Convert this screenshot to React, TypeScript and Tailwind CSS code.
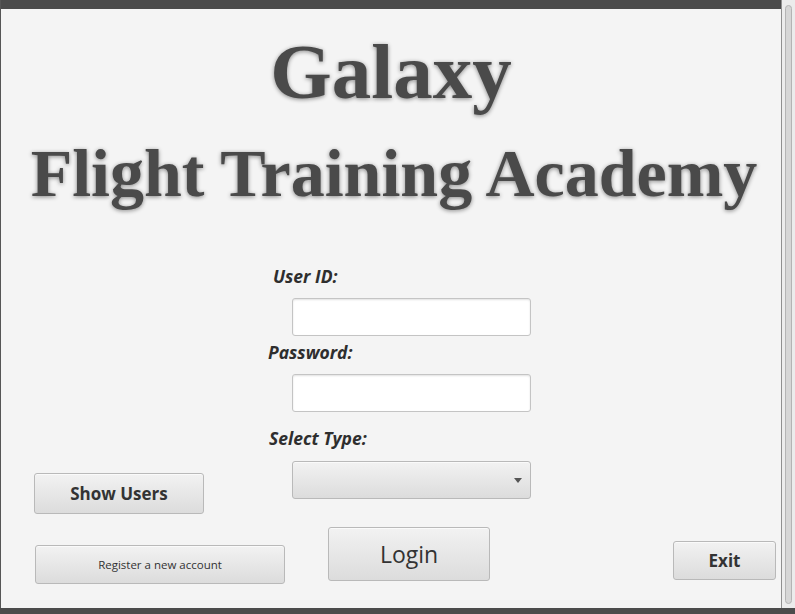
import React from 'react'

const btn =
  'flex items-center justify-center rounded-[3px] border border-[#b9b9b9] bg-linear-to-b from-[#f2f2f2] to-[#dcdcdc] text-[#333] shadow-[inset_0_1px_0_#fafafa]'

const label = "font-['Open_Sans',sans-serif] text-[17.5px] leading-[20px] font-bold italic text-[#2e2e2e]"

const field = 'rounded-[3px] border border-[#c4c4c4] bg-white shadow-[inset_0_1px_2px_rgba(0,0,0,0.12)]'

const App = () => {
  return (
    <div className="flex h-[614px] w-[795px] flex-col overflow-hidden bg-[#f4f4f4]">
      <div className="flex flex-1">
        {/* main window */}
        <div className="flex w-[782px] flex-col border-r border-l border-[#8f8f8f] border-l-[#555]">
          <div className="h-[9px] bg-[#4b4b4b]" />

          <div className="mt-[23px] text-center font-['Liberation_Serif',serif] text-[79px] leading-[80px] font-bold text-[#4a4a4a] [text-shadow:0_1px_4px_rgba(0,0,0,0.45)]">
            Galaxy
          </div>
          <div className="mt-[28px] pl-[6px] text-center font-['Liberation_Serif',serif] text-[68px] leading-[67px] font-bold whitespace-nowrap text-[#4a4a4a] [text-shadow:0_1px_4px_rgba(0,0,0,0.45)]">
            Flight Training Academy
          </div>

          <div className={`mt-[59px] ml-[272px] ${label}`}>User ID:</div>
          <div className={`mt-[12px] ml-[291px] h-[38px] w-[239px] ${field}`} />

          <div className={`mt-[6px] ml-[267px] ${label}`}>Password:</div>
          <div className={`mt-[12px] ml-[291px] h-[38px] w-[239px] ${field}`} />

          <div className={`mt-[16px] ml-[268px] ${label}`}>Select Type:</div>

          <div className="mt-[13px] flex items-start">
            <button className={`mt-[12px] ml-[33px] h-[41px] w-[170px] font-['Open_Sans',sans-serif] text-[17px] font-bold ${btn}`}>
              Show Users
            </button>
            <div className={`ml-[88px] h-[38px] w-[239px] justify-end pr-[8px] ${btn}`}>
              <svg width="8" height="5" viewBox="0 0 8 5">
                <path d="M0 0h8L4 5z" fill="#555" />
              </svg>
            </div>
          </div>

          <div className="mt-[13px] flex items-start">
            <button className={`mt-[18px] ml-[34px] h-[39px] w-[250px] font-['Open_Sans',sans-serif] text-[11.5px] ${btn}`}>
              Register a new account
            </button>
            <button className={`ml-[43px] h-[54px] w-[162px] font-['Open_Sans',sans-serif] text-[23px] ${btn}`}>
              Login
            </button>
            <button className={`mt-[14px] ml-[183px] h-[39px] w-[103px] font-['Open_Sans',sans-serif] text-[17px] font-bold ${btn}`}>
              Exit
            </button>
          </div>
        </div>

        {/* scrollbar strip */}
        <div className="flex flex-1 justify-center bg-[#ececec] pt-[5px] pb-[4px]">
          <div className="w-[7px] rounded-full border border-[#b4b4b4] bg-[#d6d6d6]" />
        </div>
      </div>
      <div className="h-[6px] bg-[#4b4b4b]" />
    </div>
  )
}

export default App
